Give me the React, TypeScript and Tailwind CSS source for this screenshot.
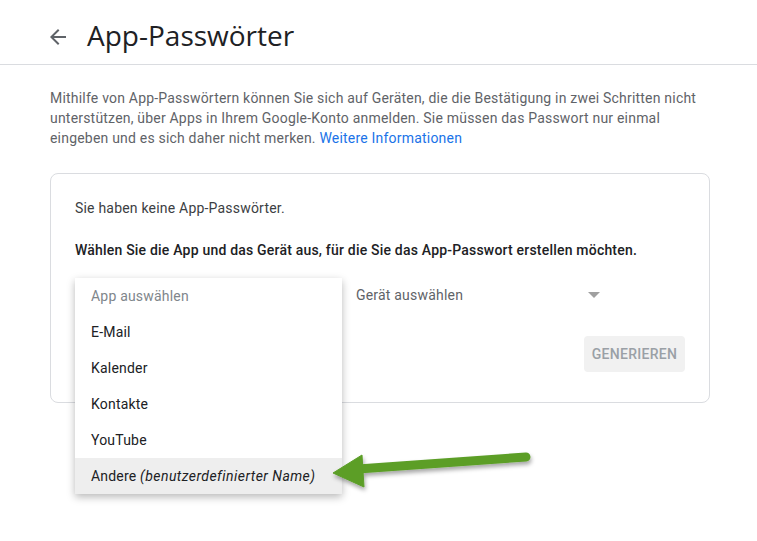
const items = ["E-Mail", "Kalender", "Kontakte", "YouTube"];

function BackArrow() {
  return (
    <svg width="24" height="24" viewBox="0 0 24 24" fill="#5f6368" className="mt-[10px]">
      <path d="M20 11H7.83l5.59-5.59L12 4l-8 8 8 8 1.41-1.41L7.83 13H20v-2z" />
    </svg>
  );
}

export default function App() {
  return (
    <div className="relative w-[757px] h-[541px] overflow-hidden bg-white font-['Roboto',sans-serif] tracking-[0.2px] text-[#202124]">
      {/* header */}
      <div className="h-[65px] border-b border-[#dadce0] flex items-center pl-[46px]">
        <BackArrow />
        <h1 className="ml-[17px] mt-[6px] text-[28px] leading-[36px] font-normal tracking-[0px] text-[#202124] font-['Open_Sans',sans-serif]">
          App-Passwörter
        </h1>
      </div>

      <div className="px-[50px] pt-[23px]">
        <p className="text-[14px] leading-[20px] text-[#5f6368] whitespace-nowrap">
          Mithilfe von App-Passwörtern können Sie sich auf Geräten, die die Bestätigung in zwei Schritten nicht
          <br />
          unterstützen, über Apps in Ihrem Google-Konto anmelden. Sie müssen das Passwort nur einmal
          <br />
          eingeben und es sich daher nicht merken. <span className="text-[#1a73e8]">Weitere Informationen</span>
        </p>

        <div className="relative mt-[25px] w-[660px] h-[230px] border border-[#dadce0] rounded-[8px] px-[24px] pt-[24px]">
          <p className="text-[14px] leading-[20px] text-[#3c4043]">Sie haben keine App-Passwörter.</p>
          <p className="mt-[22px] text-[14px] leading-[20px] font-medium text-[#202124] whitespace-nowrap">
            Wählen Sie die App und das Gerät aus, für die Sie das App-Passwort erstellen möchten.
          </p>

          <div className="mt-[17px] flex items-center h-[36px]">
            <div className="w-[281px]" />
            <div className="w-[256px] flex items-center justify-between text-[14px] text-[#5f6368]">
              <span>Gerät auswählen</span>
              <span className="mr-[12px] w-0 h-0 border-l-[6px] border-r-[6px] border-t-[6px] border-l-transparent border-r-transparent border-t-[#a0a0a0]" />
            </div>
          </div>

          <div className="flex justify-end mt-[23px]">
            <div className="w-[101px] h-[36px] rounded-[4px] bg-[#f1f1f1] flex items-center justify-center text-[14px] font-medium text-[#9aa0a6] tracking-[0.3px]">
              GENERIEREN
            </div>
          </div>

          {/* open menu */}
          <div className="absolute left-[24px] top-[104px] w-[267px] bg-white shadow-[0_3px_8px_rgba(0,0,0,0.28)] text-[14px]">
            <div className="h-[36px] flex items-center pl-[16px] text-[#80868b]">App auswählen</div>
            {items.map((it) => (
              <div key={it} className="h-[36px] flex items-center pl-[16px] text-[#202124]">
                {it}
              </div>
            ))}
            <div className="h-[36px] flex items-center pl-[16px] bg-[#eeeeee] text-[#202124] whitespace-nowrap">
              Andere&nbsp;<i className="tracking-[0.45px]">(benutzerdefinierter Name)</i>
            </div>
          </div>
        </div>
      </div>

      {/* annotation arrow */}
      <svg className="absolute left-0 top-0 pointer-events-none" width="757" height="541">
        <defs>
          <filter id="sh" x="-10%" y="-30%" width="120%" height="180%">
            <feDropShadow dx="1" dy="3" stdDeviation="2" floodColor="#000" floodOpacity="0.35" />
          </filter>
        </defs>
        <g filter="url(#sh)" fill="#5b9e27" stroke="#5b9e27">
          <line x1="358" y1="469" x2="526" y2="457" strokeWidth="9" strokeLinecap="round" />
          <polygon points="333,473 362,455 364,487" strokeWidth="1" strokeLinejoin="round" />
        </g>
      </svg>
    </div>
  );
}
